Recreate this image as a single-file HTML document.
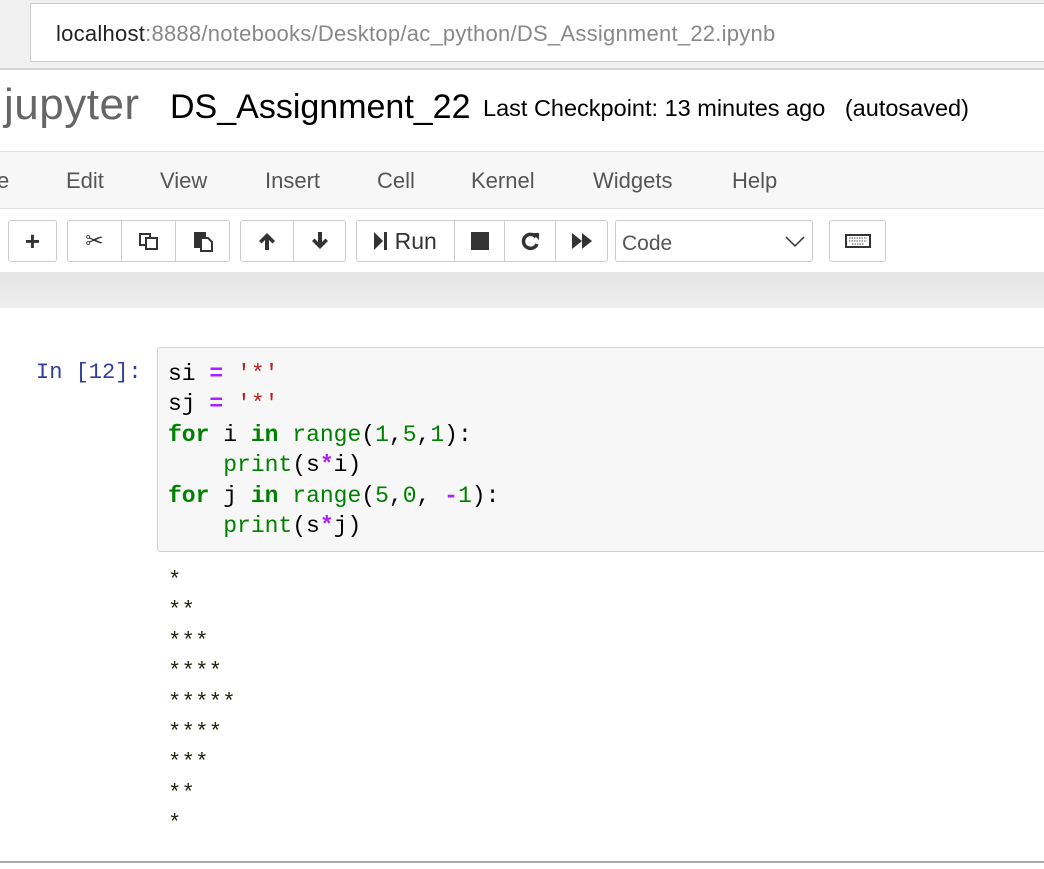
<!DOCTYPE html>
<html><head><style>
*{margin:0;padding:0;box-sizing:border-box}
body{width:1044px;height:869px;overflow:hidden;background:#fff;font-family:"Liberation Sans",sans-serif;position:relative}
.abs{position:absolute}
.btn{position:absolute;top:220px;height:42px;border:1px solid #ccc;border-radius:3px;background:#fff}
.b{position:absolute;top:0;height:40px;display:flex;align-items:center;justify-content:center;border-left:1px solid #ccc;color:#333}
.b:first-child{border-left:none}
.menu span{position:absolute;top:168px;font-size:22px;color:#555}
.code{position:absolute;left:168px;font-family:"Liberation Mono",monospace;font-size:23px;line-height:30.4px;color:#000;white-space:pre}
.k{color:#008000;font-weight:bold}.g{color:#008000}.p{color:#aa22ff;font-weight:bold}.s{color:#ba2121}
</style></head><body>
<div class="abs" style="left:0;top:0;width:1044px;height:70px;background:#f0f0f0;border-bottom:2px solid #d6d6d6"></div>
<div class="abs" style="left:30px;top:3px;width:1030px;height:59px;background:#fff;border:1px solid #ccc"></div>
<div class="abs" style="left:56px;top:21px;font-size:22px;letter-spacing:0.25px;color:#222;white-space:nowrap">localhost<span style="color:#888">:8888/notebooks/Desktop/ac_python/DS_Assignment_22.ipynb</span></div>

<div class="abs" style="left:4px;top:80px;font-size:44px;color:#666;letter-spacing:0.5px">jupyter</div>
<div class="abs" style="left:170px;top:88px;font-size:34px;color:#000">DS_Assignment_22</div>
<div class="abs" style="left:483px;top:95px;font-size:23.5px;color:#000;white-space:nowrap">Last Checkpoint: 13 minutes ago&nbsp;&nbsp;&nbsp;(autosaved)</div>

<div class="abs" style="left:0;top:151px;width:1044px;height:58px;background:#f7f7f7;border-top:1px solid #e0e0e0;border-bottom:1px solid #e0e0e0"></div>
<div class="menu"><span style="left:-3px">e</span><span style="left:66px">Edit</span><span style="left:160px">View</span><span style="left:265px">Insert</span><span style="left:377px">Cell</span><span style="left:471px">Kernel</span><span style="left:593px">Widgets</span><span style="left:732px">Help</span></div>

<div class="btn" style="left:8px;width:49px"><div class="b" style="left:0;width:47px;font-size:26px;font-weight:bold">+</div></div>
<div class="btn" style="left:67px;width:163px">
<div class="b" style="left:0;width:53px;font-size:22px">✂</div>
<div class="b" style="left:53px;width:54px"><svg width="24" height="24" viewBox="0 0 24 24" fill="none" stroke="#333" stroke-width="2"><rect x="3" y="5" width="10" height="11"/><rect x="9" y="9" width="11" height="11" fill="#fff"/></svg></div>
<div class="b" style="left:107px;width:54px"><svg width="24" height="24" viewBox="0 0 24 24"><rect x="3" y="3" width="12" height="16" fill="#333"/><path d="M10 9h7l4 4v9H10z" fill="#fff" stroke="#333" stroke-width="2"/></svg></div>
</div>
<div class="btn" style="left:240px;width:106px">
<div class="b" style="left:0;width:52px"><svg width="22" height="22" viewBox="0 0 22 22"><path d="M11 3L3 11l2.5 2.5L9 10v10h4V10l3.5 3.5L19 11z" fill="#333"/></svg></div>
<div class="b" style="left:52px;width:52px"><svg width="22" height="22" viewBox="0 0 22 22"><path d="M11 19L3 11l2.5-2.5L9 12V2h4v10l3.5-3.5L19 11z" fill="#333"/></svg></div>
</div>
<div class="btn" style="left:356px;width:252px">
<div class="b" style="left:0;width:97px;font-size:23px"><svg width="14" height="20" viewBox="0 0 14 20"><path d="M0 1l9 9-9 9z" fill="#333"/><rect x="10" y="1" width="3" height="18" fill="#333"/></svg>&nbsp;Run</div>
<div class="b" style="left:97px;width:50px"><div style="width:18px;height:18px;background:#333"></div></div>
<div class="b" style="left:147px;width:51px"><svg width="22" height="22" viewBox="0 0 22 22"><path d="M17 7A7 7 0 1 0 18 14" fill="none" stroke="#333" stroke-width="3.5"/><path d="M13 3h7v7z" fill="#333"/></svg></div>
<div class="b" style="left:198px;width:52px"><svg width="22" height="18" viewBox="0 0 22 18"><path d="M1 1l10 8-10 8zM11 1l10 8-10 8z" fill="#333"/></svg></div>
</div>
<div class="btn" style="left:615px;width:198px"><span style="position:absolute;left:6px;top:11px;font-size:21px;color:#555">Code</span><svg style="position:absolute;right:6px;top:14px" width="22" height="14" viewBox="0 0 22 14"><path d="M2 2l9 9 9-9" fill="none" stroke="#333" stroke-width="1.5"/></svg></div>
<div class="btn" style="left:829px;width:57px"><svg style="position:absolute;left:15px;top:13px" width="26" height="14" viewBox="0 0 26 14"><rect x="1" y="1" width="24" height="12" fill="#fff" stroke="#333" stroke-width="2"/><path d="M4 4h18M4 7h18M7 10h12" stroke="#777" stroke-width="1.2" stroke-dasharray="1.5 1"/></svg></div>

<div class="abs" style="left:0;top:272px;width:1044px;height:36px;background:linear-gradient(#e4e4e4,#eee)"></div>

<div class="abs" style="left:36px;top:360px;font-family:'Liberation Mono',monospace;font-size:22px;color:#303f9f">In [12]:</div>
<div class="abs" style="left:157px;top:347px;width:900px;height:205px;background:#f7f7f7;border:1px solid #cfcfcf;border-radius:3px"></div>
<div class="code" style="top:359px">si <span class="p">=</span> <span class="s">'*'</span>
sj <span class="p">=</span> <span class="s">'*'</span>
<span class="k">for</span> i <span class="k">in</span> <span class="g">range</span>(<span class="g">1</span>,<span class="g">5</span>,<span class="g">1</span>):
    <span class="g">print</span>(s<span class="p">*</span>i)
<span class="k">for</span> j <span class="k">in</span> <span class="g">range</span>(<span class="g">5</span>,<span class="g">0</span>, <span class="p">-</span><span class="g">1</span>):
    <span class="g">print</span>(s<span class="p">*</span>j)</div>
<div class="code" style="top:566px;font-size:22px;line-height:30.4px;letter-spacing:0.4px;color:#221">*
**
***
****
*****
****
***
**
*</div>
<div class="abs" style="left:0;top:861px;width:1044px;height:2px;background:#aaa"></div>
</body></html>
